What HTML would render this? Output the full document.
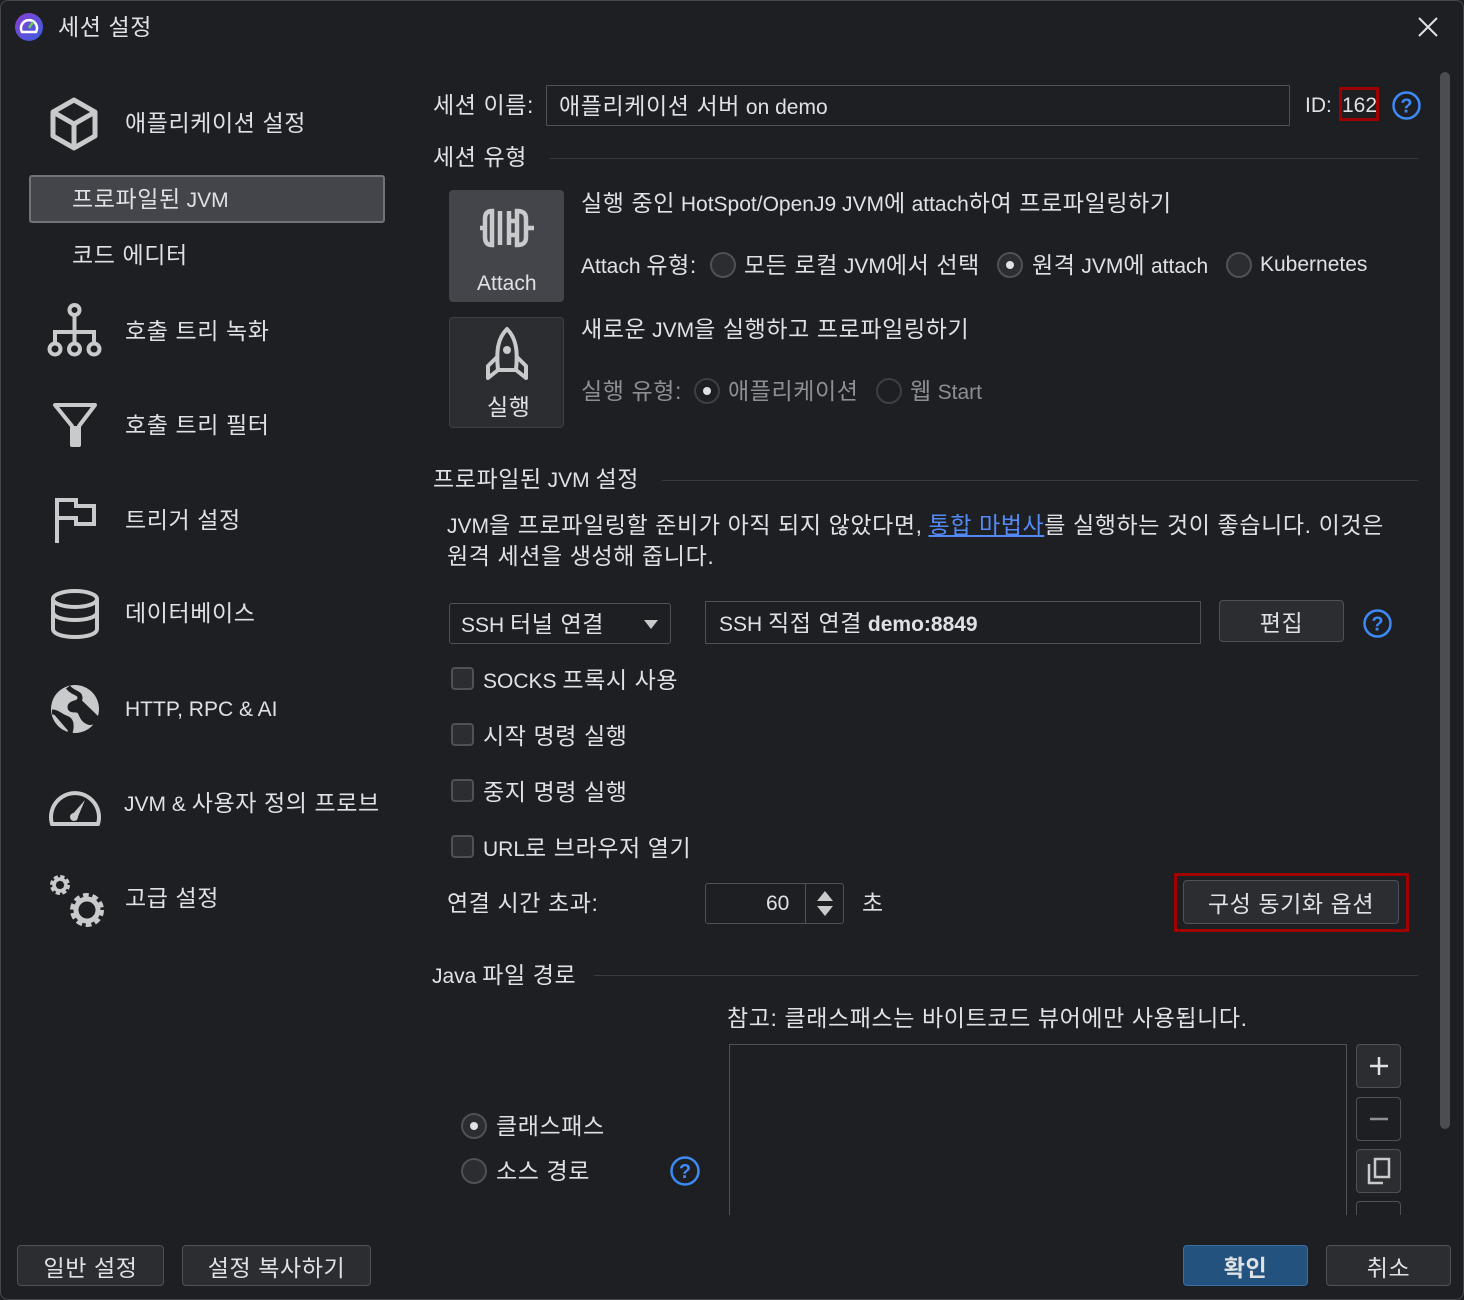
<!DOCTYPE html>
<html><head><meta charset="utf-8"><style>
*{margin:0;padding:0;box-sizing:border-box}
body{width:1464px;height:1300px;background:#1e1f22;overflow:hidden;position:relative;font-family:"Liberation Sans","Noto Sans CJK KR",sans-serif;color:#dfe1e5}
.win{position:absolute;left:0;top:0;width:1464px;height:1300px;border:1px solid #45484d;border-radius:8px}
.t{position:absolute;white-space:nowrap;font-size:21px;line-height:24px;height:24px}
.k{font-size:23px;letter-spacing:0.6px}
.g{color:#8c8f94}
.box{position:absolute;border:1px solid #4e5157;border-radius:3px}
.btn{position:absolute;background:#2b2d30;border:1px solid #4e5157;border-radius:4px;font-size:23px;letter-spacing:0.6px;display:flex;align-items:center;justify-content:center}
.rad{position:absolute;width:26px;height:26px;border-radius:50%;border:2px solid #4e5157;background:#2b2d30}
.rad.on::after{content:"";position:absolute;left:7px;top:7px;width:8px;height:8px;border-radius:50%;background:#dfe1e5}
.cb{position:absolute;width:23px;height:23px;border:2px solid #4e5157;border-radius:4px;background:#2b2d30}
.line{position:absolute;height:1px;background:#393b40}
svg{position:absolute}
</style></head><body>
<div class="win"></div>
<svg style="left:15px;top:13px" width="28" height="28" viewBox="0 0 28 28"><defs><linearGradient id="lg" x1="0" y1="0" x2="1" y2="1"><stop offset="0" stop-color="#8a3fd1"/><stop offset="1" stop-color="#3a5ee0"/></linearGradient></defs><circle cx="14" cy="14" r="14" fill="url(#lg)"/><path d="M7 19 A8 8 0 1 1 21 19 Z" fill="none" stroke="#fff" stroke-width="2.5"/><path d="M14 15 L18 9" stroke="#6c6" stroke-width="2.5"/></svg>
<div class="t k" style="left:58px;top:15px">세션 설정</div>
<svg style="left:1418px;top:17px" width="20" height="20"><path d="M1 1L19 19M19 1L1 19" stroke="#dfe1e5" stroke-width="2"/></svg>

<svg style="left:50px;top:97px" width="48" height="54" viewBox="0 0 48 54"><path d="M24 3L45 15V39L24 51L3 39V15Z M3 15L24 27L45 15 M24 27V51" fill="none" stroke="#c9cacc" stroke-width="5" stroke-linejoin="round"/></svg>
<div class="t k" style="left:125px;top:111px">애플리케이션 설정</div>
<div style="position:absolute;left:29px;top:175px;width:356px;height:48px;background:#43454a;border:2px solid #6f737a;border-radius:3px"></div>
<div class="t" style="left:72px;top:187px"><span class="k">프로파일된</span> JVM</div>
<div class="t k" style="left:72px;top:243px">코드 에디터</div>
<svg style="left:47px;top:302px" width="55" height="56" viewBox="0 0 55 56"><g fill="none" stroke="#c9cacc" stroke-width="4"><circle cx="27.5" cy="8" r="5"/><circle cx="8" cy="47" r="5.5"/><circle cx="27.5" cy="47" r="5.5"/><circle cx="47" cy="47" r="5.5"/><path d="M27.5 13V41M8 41V30H47V41"/></g></svg>
<div class="t k" style="left:125px;top:319px">호출 트리 녹화</div>
<svg style="left:52px;top:402px" width="46" height="46" viewBox="0 0 46 46"><path d="M3 3H43L27 24V43H20V24Z" fill="none" stroke="#c9cacc" stroke-width="4" stroke-linejoin="round"/><path d="M20 24H27V43H20Z" fill="#c9cacc"/></svg>
<div class="t k" style="left:125px;top:413px">호출 트리 필터</div>
<svg style="left:54px;top:497px" width="44" height="48" viewBox="0 0 44 48"><path d="M3 46V3H22V9H40V27H22V21H3" fill="none" stroke="#c9cacc" stroke-width="4"/></svg>
<div class="t k" style="left:125px;top:508px">트리거 설정</div>
<svg style="left:49px;top:588px" width="52" height="52" viewBox="0 0 52 52"><g fill="none" stroke="#c9cacc" stroke-width="4"><ellipse cx="26" cy="11" rx="22" ry="8"/><path d="M4 11V41C4 46 14 49 26 49S48 46 48 41V11M4 24C4 29 14 32 26 32S48 29 48 24"/></g></svg>
<div class="t k" style="left:125px;top:601px">데이터베이스</div>
<svg style="left:48px;top:682px" width="54" height="54" viewBox="0 0 54 54"><circle cx="27" cy="27" r="24" fill="#c9cacc"/><path d="M20 5C25 12 32 10 32 16S22 20 22 25S30 26 32 30S35 38 40 40C44 42 49 38 50 34 M4 30C10 30 12 34 18 36S24 44 22 51" fill="#1e1f22" stroke="#1e1f22" stroke-width="5"/></svg>
<div class="t" style="left:125px;top:698px">HTTP, RPC &amp; AI</div>
<svg style="left:47px;top:782px" width="56" height="46" viewBox="0 0 56 46"><path d="M5 42A24 24 0 1 1 51 42Z" fill="none" stroke="#c9cacc" stroke-width="4" stroke-linejoin="round"/><path d="M24 34L38 18L30 37Z" fill="#c9cacc"/><circle cx="27" cy="35" r="4" fill="#c9cacc"/></svg>
<div class="t" style="left:124px;top:791px">JVM &amp; <span class="k">사용자 정의 프로브</span></div>
<svg style="left:47px;top:870px" width="60" height="60" viewBox="0 0 60 60"><g fill="none" stroke="#c9cacc"><circle cx="13" cy="15" r="7" stroke-width="6" stroke-dasharray="3.5 2"/><circle cx="13" cy="15" r="6" stroke-width="3.5"/><circle cx="40" cy="40" r="13" stroke-width="8" stroke-dasharray="5 3.2"/><circle cx="40" cy="40" r="11" stroke-width="5"/></g></svg>
<div class="t k" style="left:125px;top:886px">고급 설정</div>

<div class="t k" style="left:433px;top:93px">세션 이름:</div>
<div class="box" style="left:546px;top:85px;width:744px;height:41px;border-radius:1px"></div>
<div class="t" style="left:559px;top:94px"><span class="k">애플리케이션 서버</span> on demo</div>
<div class="t" style="left:1305px;top:94px">ID:</div>
<div style="position:absolute;left:1339px;top:87px;width:40px;height:34px;border:3px solid #a00000"></div>
<div class="t" style="left:1342px;top:94px">162</div>
<svg style="left:1391px;top:90px" width="31" height="31"><circle cx="15.5" cy="15.5" r="13" fill="none" stroke="#3d8af7" stroke-width="2.5"/><text x="15.5" y="22.5" text-anchor="middle" font-family="Liberation Sans" font-size="20" font-weight="bold" fill="#3d8af7">?</text></svg>

<div class="t k" style="left:433px;top:145px">세션 유형</div>
<div class="line" style="left:550px;top:158px;width:868px"></div>

<div style="position:absolute;left:449px;top:190px;width:115px;height:112px;background:#43454a;border-radius:4px"></div>
<svg style="left:478px;top:205px" width="60" height="46" viewBox="0 0 60 46"><g fill="none" stroke="#c9cacc" stroke-width="4.5"><path d="M2 23H7M14 6C9 6 7 9 7 14V32C7 37 9 40 14 40Z"/><path d="M22 6V40"/><path d="M31 16H39M31 30H39"/><path d="M31 6V40"/><path d="M39 6C46 6 48 9 48 14V32C48 37 46 40 39 40Z M48 23H56"/></g></svg>
<div class="t" style="left:477px;top:272px">Attach</div>
<div style="position:absolute;left:449px;top:317px;width:115px;height:111px;background:#2b2d30;border:1px solid #3c3f44;border-radius:4px"></div>
<svg style="left:484px;top:326px" width="46" height="56" viewBox="0 0 46 56"><g fill="none" stroke="#c9cacc" stroke-width="4" stroke-linejoin="round"><path d="M23 3C14 12 12 24 14 44H32C34 24 32 12 23 3Z"/><path d="M14 30L4 40V52L14 44M32 30L42 40V52L32 44"/></g><circle cx="23" cy="24" r="4" fill="#c9cacc"/></svg>
<div class="t k" style="left:487px;top:395px">실행</div>

<div class="t" style="left:581px;top:191px"><span class="k">실행 중인</span> HotSpot/OpenJ9 JVM<span class="k">에</span> attach<span class="k">하여 프로파일링하기</span></div>
<div class="t" style="left:581px;top:253px">Attach <span class="k">유형:</span></div>
<div class="rad" style="left:710px;top:252px"></div>
<div class="t" style="left:744px;top:253px"><span class="k">모든 로컬</span> JVM<span class="k">에서 선택</span></div>
<div class="rad on" style="left:997px;top:252px"></div>
<div class="t" style="left:1032px;top:253px"><span class="k">원격</span> JVM<span class="k">에</span> attach</div>
<div class="rad" style="left:1226px;top:252px"></div>
<div class="t" style="left:1260px;top:253px">Kubernetes</div>
<div class="t" style="left:581px;top:317px"><span class="k">새로운</span> JVM<span class="k">을 실행하고 프로파일링하기</span></div>
<div class="t g k" style="left:581px;top:379px">실행 유형:</div>
<div class="rad on" style="left:694px;top:378px;background:#1e1f22;border-color:#3c3f44"></div>
<div class="t g k" style="left:728px;top:379px">애플리케이션</div>
<div class="rad" style="left:876px;top:378px;background:#1e1f22;border-color:#3c3f44"></div>
<div class="t g" style="left:910px;top:379px"><span class="k">웹</span> Start</div>

<div class="t" style="left:433px;top:467px"><span class="k">프로파일된</span> JVM <span class="k">설정</span></div>
<div class="line" style="left:662px;top:480px;width:756px"></div>
<div class="t" style="left:447px;top:513px">JVM<span class="k">을 프로파일링할 준비가 아직 되지 않았다면,</span> <span class="k" style="color:#548af7;text-decoration:underline">통합 마법사</span><span class="k">를 실행하는 것이 좋습니다. 이것은</span></div>
<div class="t k" style="left:447px;top:544px">원격 세션을 생성해 줍니다.</div>

<div class="box" style="left:449px;top:603px;width:222px;height:41px;background:#1e1f22"></div>
<div class="t" style="left:461px;top:612px">SSH <span class="k">터널 연결</span></div>
<svg style="left:643px;top:618px" width="16" height="12"><path d="M1 2H15L8 11Z" fill="#c9cacc"/></svg>
<div class="box" style="left:705px;top:601px;width:496px;height:43px;border-radius:1px"></div>
<div class="t" style="left:719px;top:611px">SSH <span class="k">직접 연결</span> <b>demo:8849</b></div>
<div class="btn" style="left:1219px;top:600px;width:125px;height:42px">편집</div>
<svg style="left:1362px;top:608px" width="31" height="31"><circle cx="15.5" cy="15.5" r="13" fill="none" stroke="#3d8af7" stroke-width="2.5"/><text x="15.5" y="22.5" text-anchor="middle" font-family="Liberation Sans" font-size="20" font-weight="bold" fill="#3d8af7">?</text></svg>

<div class="cb" style="left:451px;top:667px"></div><div class="t" style="left:483px;top:668px">SOCKS <span class="k">프록시 사용</span></div>
<div class="cb" style="left:451px;top:723px"></div><div class="t k" style="left:483px;top:724px">시작 명령 실행</div>
<div class="cb" style="left:451px;top:779px"></div><div class="t k" style="left:483px;top:780px">중지 명령 실행</div>
<div class="cb" style="left:451px;top:835px"></div><div class="t" style="left:483px;top:836px">URL<span class="k">로 브라우저 열기</span></div>

<div class="t k" style="left:447px;top:891px">연결 시간 초과:</div>
<div class="box" style="left:705px;top:883px;width:139px;height:41px"></div>
<div style="position:absolute;left:805px;top:884px;width:1px;height:39px;background:#4e5157"></div>
<div class="t" style="left:766px;top:892px">60</div>
<svg style="left:816px;top:890px" width="18" height="28"><path d="M9 1L17 11H1Z M1 16H17L9 26Z" fill="#c9cacc"/></svg>
<div class="t k" style="left:862px;top:891px">초</div>
<div style="position:absolute;left:1174px;top:873px;width:235px;height:59px;border:3px solid #a00000"></div>
<div class="btn" style="left:1183px;top:880px;width:216px;height:44px">구성 동기화 옵션</div>

<div class="t" style="left:432px;top:963px">Java <span class="k">파일 경로</span></div>
<div class="line" style="left:594px;top:975px;width:824px"></div>
<div class="t k" style="left:727px;top:1006px">참고: 클래스패스는 바이트코드 뷰어에만 사용됩니다.</div>
<div style="position:absolute;left:729px;top:1044px;width:618px;height:171px;border:1px solid #4e5157;border-bottom:none"></div>
<div class="btn" style="left:1356px;top:1044px;width:45px;height:44px"><svg style="position:static" width="20" height="20"><path d="M10 1V19M1 10H19" stroke="#dfe1e5" stroke-width="2.5"/></svg></div>
<div class="btn" style="left:1356px;top:1097px;width:45px;height:44px;background:#1e1f22"><svg style="position:static" width="20" height="4"><path d="M1 2H19" stroke="#8c8f94" stroke-width="2.5"/></svg></div>
<div class="btn" style="left:1356px;top:1149px;width:45px;height:44px"><svg style="position:static" width="24" height="28"><path d="M8 2H22V20H8Z" fill="none" stroke="#c9cacc" stroke-width="2.5"/><path d="M2 7V26H16" fill="none" stroke="#c9cacc" stroke-width="2.5"/></svg></div>
<div style="position:absolute;left:1356px;top:1201px;width:45px;height:14px;border:1px solid #4e5157;border-bottom:none;border-radius:4px 4px 0 0"></div>

<div class="rad on" style="left:461px;top:1113px"></div>
<div class="t k" style="left:496px;top:1114px">클래스패스</div>
<div class="rad" style="left:461px;top:1158px"></div>
<div class="t k" style="left:496px;top:1159px">소스 경로</div>
<svg style="left:669px;top:1155px" width="32" height="32"><circle cx="16" cy="16" r="13.5" fill="none" stroke="#3d8af7" stroke-width="2.5"/><text x="16" y="23" text-anchor="middle" font-family="Liberation Sans" font-size="20" font-weight="bold" fill="#3d8af7">?</text></svg>

<div style="position:absolute;left:1440px;top:72px;width:10px;height:1057px;background:#4b4d51;border-radius:5px"></div>

<div class="btn" style="left:17px;top:1245px;width:147px;height:41px">일반 설정</div>
<div class="btn" style="left:182px;top:1245px;width:189px;height:41px">설정 복사하기</div>
<div class="btn" style="left:1183px;top:1245px;width:125px;height:41px;background:#24527f;border-color:#3b6ea5;font-weight:bold">확인</div>
<div class="btn" style="left:1326px;top:1245px;width:125px;height:41px">취소</div>
</body></html>
